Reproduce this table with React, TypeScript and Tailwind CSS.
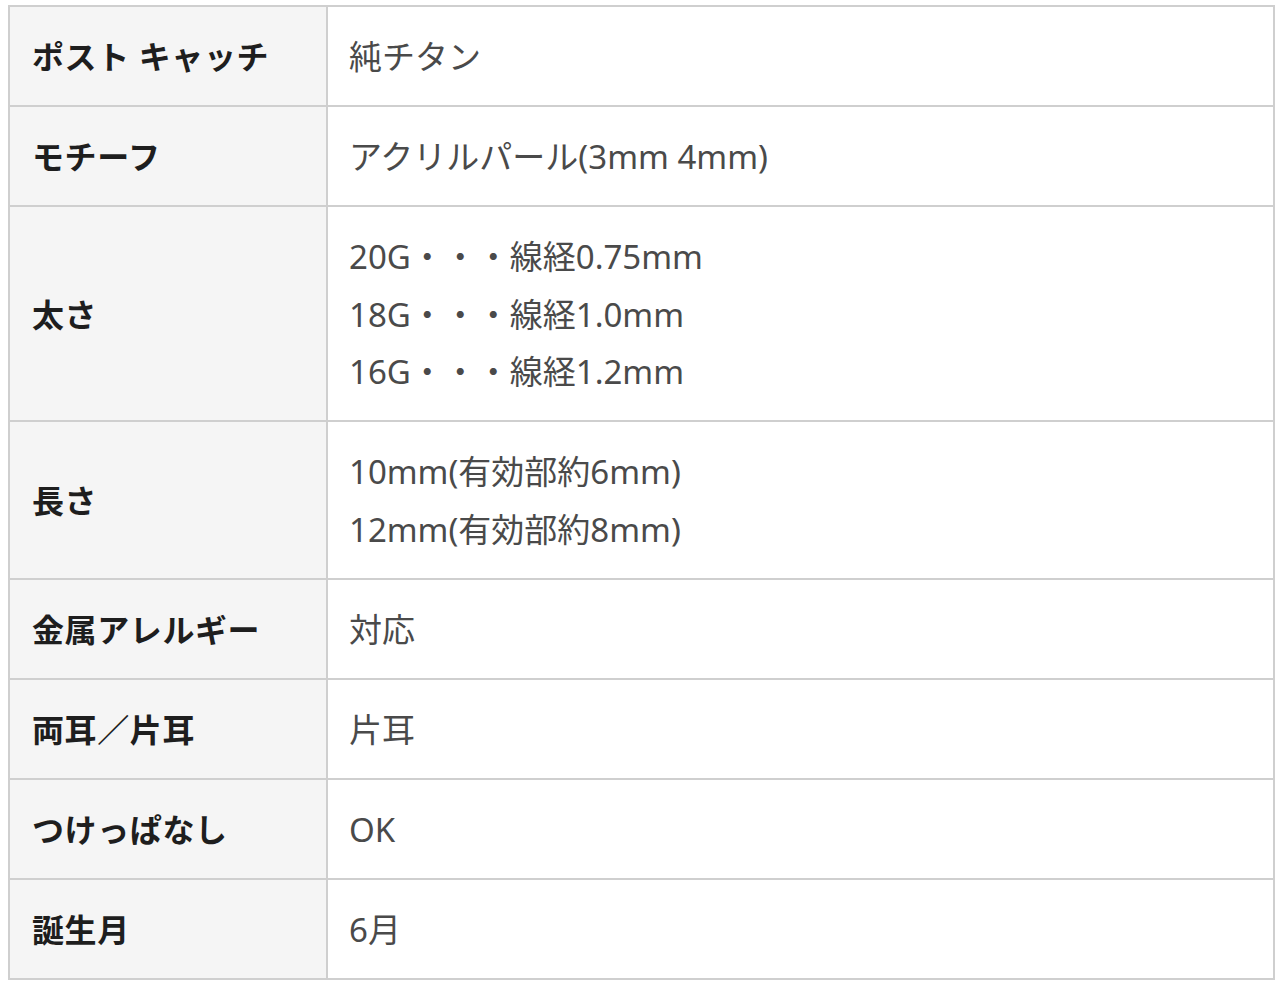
const rows: { label: string; lines: string[] }[] = [
  { label: "ポスト キャッチ", lines: ["純チタン"] },
  { label: "モチーフ", lines: ["アクリルパール(3mm 4mm)"] },
  {
    label: "太さ",
    lines: ["20G・・・線経0.75mm", "18G・・・線経1.0mm", "16G・・・線経1.2mm"],
  },
  { label: "長さ", lines: ["10mm(有効部約6mm)", "12mm(有効部約8mm)"] },
  { label: "金属アレルギー", lines: ["対応"] },
  { label: "両耳／片耳", lines: ["片耳"] },
  { label: "つけっぱなし", lines: ["OK"] },
  { label: "誕生月", lines: ["6月"] },
];

export default function App() {
  return (
    <div
      className="min-h-[987px] bg-white pl-[8px] pr-[5px] pt-[5px]"
      style={{ fontFamily: '"Noto Sans", "Noto Sans CJK JP", sans-serif' }}
    >
      <table className="w-full border-collapse border-2 border-[#cfcfcf]">
        <tbody>
          {rows.map((r) => (
            <tr key={r.label}>
              <th className="w-[318px] border-2 border-[#cfcfcf] bg-[#f5f5f5] pt-[21px] pb-[19.5px] pl-[22px] pr-2 text-left align-middle text-[32px] font-bold leading-[57.5px] tracking-[0.6px] text-[#1e1e1e]">
                {r.label}
              </th>
              <td className="border-2 border-[#cfcfcf] bg-white pt-[21px] pb-[19.5px] pl-[21px] text-left align-middle text-[33px] leading-[57.5px] text-[#4a4a4a]">
                {r.lines.map((l) => (
                  <div key={l}>{l}</div>
                ))}
              </td>
            </tr>
          ))}
        </tbody>
      </table>
    </div>
  );
}
